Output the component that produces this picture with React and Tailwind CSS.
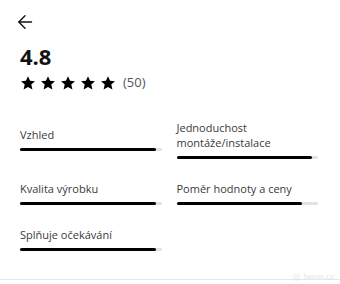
import React from 'react';

const Star = () => (
  <svg width="16" height="16" viewBox="0 0 24 24" className="text-black">
    <path fill="currentColor" d="M12 1.8l3.1 6.9 7.4.7-5.6 5 1.7 7.4L12 17.9l-6.6 3.9 1.7-7.4-5.6-5 7.4-.7z" />
  </svg>
);

const Bar = ({ label, value }) => (
  <div className="flex flex-col">
    <div className="text-[11px] leading-[15px] text-[#3a3a3a]">{label}</div>
    <div className="mt-[6px] h-[3px] w-full rounded-full bg-[#e2e2e2]">
      <div className="h-full rounded-full bg-black" style={{ width: `${value}%` }} />
    </div>
  </div>
);

export default function App() {
  return (
    <div className="w-[340px] h-[284px] bg-white relative overflow-hidden" style={{ fontFamily: '"Open Sans", sans-serif' }}>
      <div className="pl-[20px] pr-[22px] pt-[14px]">
        <svg width="16" height="16" viewBox="0 0 16 16" className="-ml-[3px]" fill="none" stroke="#111" strokeWidth="1.4" strokeLinecap="round" strokeLinejoin="round">
          <path d="M14.5 8H2" />
          <path d="M8 1.8L1.8 8 8 14.2" />
        </svg>
        <div className="mt-[13px] text-[22px] leading-[26px] font-bold text-[#111]">4.8</div>
        <div className="mt-[4px] flex items-center gap-[4px]">
          <Star /><Star /><Star /><Star /><Star />
          <span className="ml-[3px] text-[13px] text-[#555]">(50)</span>
        </div>
        <div className="mt-[27px] grid grid-cols-2 items-center gap-x-[15px] gap-y-[22px]">
          <Bar label="Vzhled" value={96} />
          <Bar label={<>Jednoduchost<br />montáže/instalace</>} value={96} />
          <Bar label="Kvalita výrobku" value={96} />
          <Bar label="Poměr hodnoty a ceny" value={89} />
          <Bar label="Splňuje očekávání" value={96} />
        </div>
      </div>
      <div className="absolute left-0 right-0 top-[279px] h-px bg-[#e6e6e6]" />
      <div className="absolute right-[6px] top-[270px] text-[9px] text-[#e4e4e4]" style={{ fontFamily: '"Liberation Serif", serif' }}>@ bazos.cz</div>
    </div>
  );
}
